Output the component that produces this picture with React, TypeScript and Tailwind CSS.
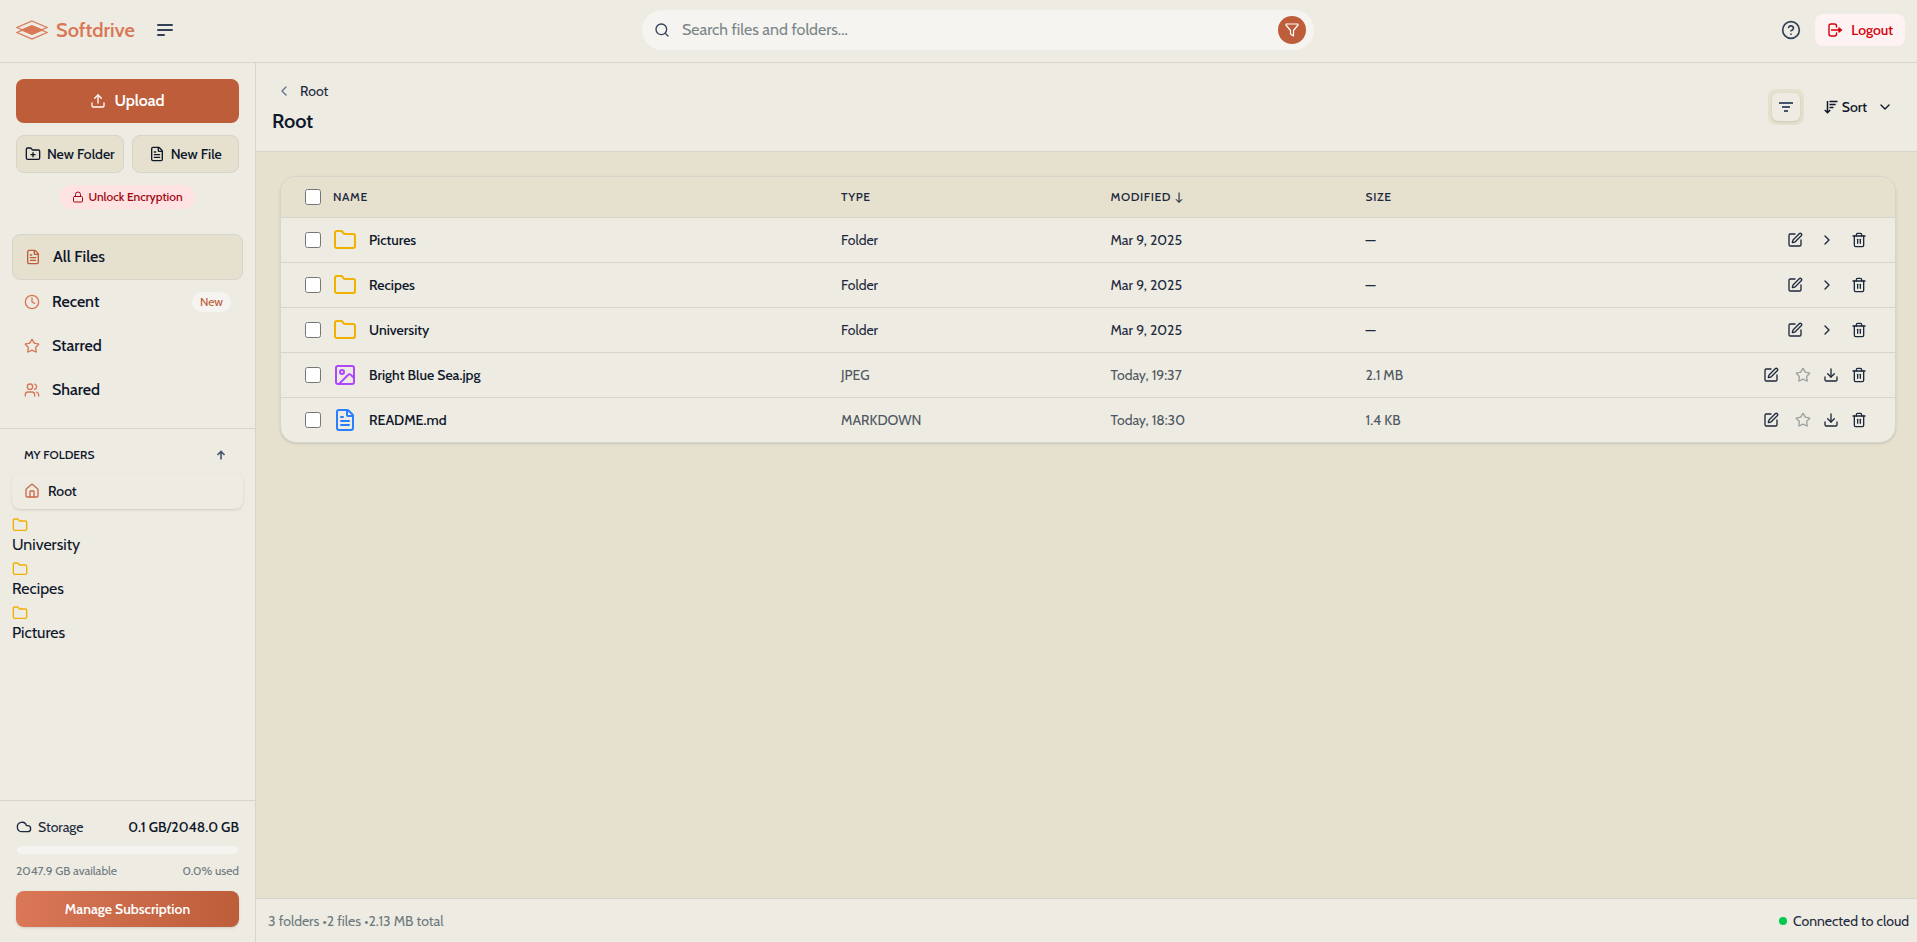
import type { ReactNode } from "react";
import {
  ChevronDown,
  ChevronLeft,
  ChevronRight,
  CircleHelp,
  Clock,
  Cloud,
  Download,
  FileText,
  Folder,
  FolderPlus,
  House,
  Image,
  Lock,
  Search,
  SquarePen,
  Star,
  Trash2,
  Upload,
  Users,
} from "lucide-react";

type Entry = {
  name: string;
  kind: "folder" | "image" | "doc";
  type: string;
  modified: string;
  size: string;
};

const entries: Entry[] = [
  { name: "Pictures", kind: "folder", type: "Folder", modified: "Mar 9, 2025", size: "—" },
  { name: "Recipes", kind: "folder", type: "Folder", modified: "Mar 9, 2025", size: "—" },
  { name: "University", kind: "folder", type: "Folder", modified: "Mar 9, 2025", size: "—" },
  { name: "Bright Blue Sea.jpg", kind: "image", type: "JPEG", modified: "Today, 19:37", size: "2.1 MB" },
  { name: "README.md", kind: "doc", type: "MARKDOWN", modified: "Today, 18:30", size: "1.4 KB" },
];

const folders = ["University", "Recipes", "Pictures"];

function Logo() {
  return (
    <svg width="32" height="20" viewBox="0 0 32 20" fill="none" stroke="#d97757" strokeWidth="1.2">
      <path d="M16 1 31 7.500 16 14 1 7.500Z" />
      <path d="M16 6 31 12.500 16 19 1 12.500Z" />
      <path d="M16 5 28 10 16 15 4 10Z" fill="#d97757" stroke="none" />
    </svg>
  );
}

function MenuIcon() {
  return (
    <svg width="16" height="14" viewBox="0 0 16 14" fill="none" stroke="currentColor" strokeWidth="2" strokeLinecap="round">
      <path d="M1 2h14M1 7h14M1 12h6" />
    </svg>
  );
}

function FunnelIcon() {
  return (
    <svg width="16" height="16" viewBox="0 0 16 16" fill="none" stroke="currentColor" strokeWidth="1.2" strokeLinejoin="round">
      <path d="M2 2h12v1L9.500 8.500V14L6.500 12V8.500L2 3Z" />
    </svg>
  );
}

function FilterLines() {
  return (
    <svg width="16" height="16" viewBox="0 0 16 16" fill="none" stroke="currentColor" strokeWidth="2">
      <path d="M1 4h14M4 8h8M6 12h4" />
    </svg>
  );
}

function SortIcon() {
  return (
    <svg width="14" height="14" viewBox="0 0 14 14" fill="none" stroke="currentColor" strokeWidth="1.5">
      <path d="M3.500 1v11.500M.8 10l2.700 2.700L6.200 10M5.500 1.500h8M5.500 4.500h6.200M5.500 7.500h4" />
    </svg>
  );
}

function LogoutIcon() {
  return (
    <svg width="16" height="16" viewBox="0 0 16 16" fill="none" stroke="currentColor" strokeWidth="1.400" strokeLinecap="round" strokeLinejoin="round">
      <path d="M9.500 5V4A2 2 0 0 0 7.500 2H4a2 2 0 0 0-2 2v8a2 2 0 0 0 2 2h3.500a2 2 0 0 0 2-2v-1" />
      <path d="M4.500 8H13" />
      <path d="M12 6 14.500 8 12 10Z" fill="currentColor" />
    </svg>
  );
}

function NavItem({ icon, label, badge, active }: { icon: ReactNode; label: string; badge?: string; active?: boolean }) {
  return (
    <a
      href="#"
      className={
        active
          ? "flex h-[46px] items-center gap-3 rounded-lg border border-[#d6d5cb] bg-[#e6e1cf] px-3 text-[#bd5d3a]"
          : "flex h-11 items-center gap-3 rounded-lg px-3 text-[#d97757]"
      }
    >
      {icon}
      <span className="flex-1 font-medium text-slate-900">{label}</span>
      {badge && <span className="rounded-full bg-[#f5f4f0] px-2 py-0.5 text-xs text-[#bd5d3a]">{badge}</span>}
    </a>
  );
}

function FileIcon({ kind }: { kind: Entry["kind"] }) {
  if (kind === "folder") return <Folder size={24} className="text-[#f0b100]" />;
  if (kind === "image") return <Image size={24} className="text-[#ad46ff]" />;
  return <FileText size={24} className="text-[#2b7fff]" />;
}

function Row({ entry }: { entry: Entry }) {
  const isFolder = entry.kind === "folder";
  const cell = isFolder ? "text-slate-800" : "text-[#4d5761]";

  return (
    <tr className="h-[45px] border-t border-[#d6d5cb]">
      <td className="pl-6">
        <div className="flex items-center gap-3">
          <input type="checkbox" aria-label={`Select ${entry.name}`} className="size-4" />
          <FileIcon kind={entry.kind} />
          <span className="font-medium text-slate-900">{entry.name}</span>
        </div>
      </td>
      <td className={cell}>{entry.type}</td>
      <td className={cell}>{entry.modified}</td>
      <td className={cell}>{entry.size}</td>
      <td className="pr-7">
        <div className={isFolder ? "flex justify-end gap-4 text-slate-800" : "flex justify-end gap-3 text-slate-800"}>
          <button aria-label="Rename" className={isFolder ? "" : "mr-1"}>
            <SquarePen size={16} />
          </button>
          {isFolder ? (
            <button aria-label="Open">
              <ChevronRight size={16} />
            </button>
          ) : (
            <>
              <button aria-label="Star" className="text-[#9ca3a3]">
                <Star size={16} />
              </button>
              <button aria-label="Download">
                <Download size={16} />
              </button>
            </>
          )}
          <button aria-label="Delete">
            <Trash2 size={16} />
          </button>
        </div>
      </td>
    </tr>
  );
}

function Header() {
  return (
    <header className="flex h-[63px] shrink-0 items-center border-b border-[#d6d5cb] pr-3 pb-0.5 pl-4">
      <Logo />
      <span className="ml-2 text-xl font-semibold text-[#d97757]">Softdrive</span>
      <button aria-label="Toggle sidebar" className="ml-3.5 flex size-8 items-center justify-center text-slate-700">
        <MenuIcon />
      </button>
      <div className="flex flex-1 justify-center">
        <label className="flex h-10 w-full max-w-2xl items-center gap-3 rounded-full bg-[#f5f4f0] pr-2 pl-3">
          <Search size={16} className="text-slate-700" />
          <input
            type="text"
            aria-label="Search"
            placeholder="Search files and folders..."
            className="flex-1 outline-none placeholder:text-[#7c8688]"
          />
          <button aria-label="Filters" className="flex size-7 items-center justify-center rounded-full bg-[#bd5d3a] text-white">
            <FunnelIcon />
          </button>
        </label>
      </div>
      <button aria-label="Help" className="flex size-8 items-center justify-center text-slate-700">
        <CircleHelp size={20} />
      </button>
      <button className="ml-2 flex h-8 items-center gap-2 rounded-lg bg-red-50 px-3 text-sm font-medium text-[#d4000b]">
        <LogoutIcon />
        Logout
      </button>
    </header>
  );
}

function Sidebar() {
  return (
    <aside className="flex w-64 shrink-0 flex-col border-r border-[#d6d5cb]">
      <div className="px-4 pt-4">
        <button className="flex h-11 w-full items-center justify-center gap-2 rounded-lg bg-[#bd5d3a] font-semibold text-white">
          <Upload size={16} />
          Upload
        </button>
        <div className="mt-3 flex gap-2 text-sm font-medium text-slate-900">
          <button className="flex h-[38px] flex-1 items-center justify-center gap-1.5 rounded-lg border border-[#d6d5cb] bg-[#e6e1cf] whitespace-nowrap">
            <FolderPlus size={16} />
            New Folder
          </button>
          <button className="flex h-[38px] flex-1 items-center justify-center gap-1.5 rounded-lg border border-[#d6d5cb] bg-[#e6e1cf] whitespace-nowrap">
            <FileText size={16} />
            New File
          </button>
        </div>
        <button className="mx-auto mt-3 flex h-6 items-center gap-1 rounded-full bg-[#ffe2e2] px-3 text-xs font-medium text-[#9f0712]">
          <Lock size={12} />
          Unlock Encryption
        </button>
      </div>

      <nav className="mt-[25px] flex flex-col border-b border-[#d6d5cb] px-3 pb-4">
        <NavItem icon={<FileText size={16} />} label="All Files" active />
        <NavItem icon={<Clock size={16} />} label="Recent" badge="New" />
        <NavItem icon={<Star size={16} />} label="Starred" />
        <NavItem icon={<Users size={16} />} label="Shared" />
      </nav>

      <div className="flex-1 px-3 pt-4">
        <div className="flex h-5 items-center justify-between px-3 text-xs font-medium text-slate-900">
          MY FOLDERS
          <button aria-label="Collapse" className="flex size-5 items-center justify-center text-slate-600">
            <svg width="10" height="10" viewBox="0 0 10 10" fill="none" stroke="currentColor" strokeWidth="1.600">
              <path d="M5 9.500V1.500M1.500 5 5 1.500 8.500 5" />
            </svg>
          </button>
        </div>
        <a href="#" className="mt-2 flex h-9 items-center gap-2 rounded-lg px-3 text-sm font-medium text-slate-900 shadow-sm">
          <House size={16} className="text-[#c96a48]" />
          Root
        </a>
        <ul className="mt-2 flex flex-col gap-1 text-slate-900">
          {folders.map((name) => (
            <li key={name}>
              <Folder size={16} className="text-[#f0b100]" />
              {name}
            </li>
          ))}
        </ul>
      </div>

      <div className="border-t border-[#d6d5cb] px-4 pt-4 pb-[15px]">
        <div className="flex items-center gap-1.5 text-sm text-slate-800">
          <Cloud size={16} />
          <span className="flex-1">Storage</span>
          <span className="font-medium text-slate-900">0.1 GB/2048.0 GB</span>
        </div>
        <div className="mt-2 h-[10px] rounded-full border border-[#edebe2] bg-[#f5f4f0]" />
        <div className="mt-2 flex justify-between text-xs text-[#6f7a80]">
          <span>2047.9 GB available</span>
          <span>0.0% used</span>
        </div>
        <button className="mt-3 h-9 w-full rounded-lg bg-linear-to-r from-[#d97757] to-[#bd5d3a] text-sm font-semibold text-white shadow-sm">
          Manage Subscription
        </button>
      </div>
    </aside>
  );
}

export default function App() {
  return (
    <div className="flex h-screen flex-col overflow-hidden bg-[#edebe2] font-['Cabin','Lato',sans-serif]">
      <Header />
      <div className="flex min-h-0 flex-1">
        <Sidebar />
        <main className="flex min-w-0 flex-1 flex-col">
          <div className="flex h-[89px] items-center justify-between border-b border-[#d6d5cb] px-4">
            <div className="pt-0.5">
              <div className="flex items-center gap-2 pl-1 text-sm text-slate-800">
                <ChevronLeft size={16} className="text-slate-500" />
                Root
              </div>
              <h1 className="mt-1.5 text-xl font-semibold text-slate-900">Root</h1>
            </div>
            <div className="flex items-center gap-5 pr-2">
              <button
                aria-label="Filter"
                className="flex size-9 items-center justify-center rounded-lg bg-[#e6e1cf] text-slate-600"
              >
                <span className="flex size-7 items-center justify-center rounded-md bg-[#edebe2] shadow-sm">
                  <FilterLines />
                </span>
              </button>
              <button className="flex items-center gap-1 text-sm font-medium text-slate-900">
                <SortIcon />
                Sort
                <ChevronDown size={16} className="ml-1.5" />
              </button>
            </div>
          </div>

          <div className="flex-1 overflow-auto bg-[#e6e1cf] pt-6 pr-[21px] pl-6">
            <div className="overflow-hidden rounded-2xl border border-[#d6d5cb] bg-[#edebe2] shadow-sm">
              <table className="w-full table-fixed border-collapse text-sm">
                <colgroup>
                  <col className="w-[34.7%]" />
                  <col className="w-[16.7%]" />
                  <col className="w-[15.8%]" />
                  <col className="w-[16%]" />
                  <col />
                </colgroup>
                <thead>
                  <tr className="h-10 bg-[#e6e1cf] text-left text-xs tracking-wider text-slate-800">
                    <th className="pl-6 font-medium">
                      <div className="flex items-center gap-3">
                        <input type="checkbox" aria-label="Select all" className="size-4" />
                        NAME
                      </div>
                    </th>
                    <th className="font-medium">TYPE</th>
                    <th className="font-medium">MODIFIED ↓</th>
                    <th className="font-medium">SIZE</th>
                    <th aria-label="Actions" />
                  </tr>
                </thead>
                <tbody>
                  {entries.map((entry) => (
                    <Row key={entry.name} entry={entry} />
                  ))}
                </tbody>
              </table>
            </div>
          </div>

          <footer className="flex h-11 items-center justify-between border-t border-[#d6d5cb] pr-2 pl-3 text-sm">
            <span className="text-[#6f7a80]">3 folders •2 files •2.13 MB total</span>
            <span className="flex items-center gap-1.5 text-slate-800">
              <span className="size-2 rounded-full bg-[#00c950]" />
              Connected to cloud
            </span>
          </footer>
        </main>
      </div>
    </div>
  );
}
